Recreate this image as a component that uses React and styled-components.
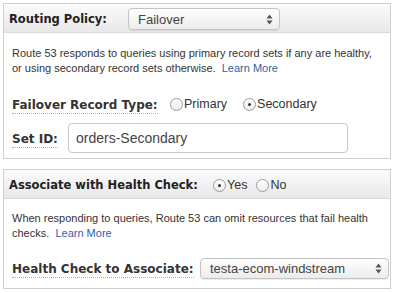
import React from "react";
import styled, { createGlobalStyle } from "styled-components";

const GlobalStyle = createGlobalStyle`
  html, body { margin: 0; padding: 0; background: #fff; }
  body { font-family: "Liberation Sans", Arial, sans-serif; color: #333; }
`;

const Page = styled.div`
  width: 397px;
  height: 293px;
  padding: 3px 6px 0 3px;
  box-sizing: border-box;
  display: flex;
  flex-direction: column;
  gap: 10px;
`;

const Panel = styled.section`
  border: 1px solid #cfcfcf;
  background: #fff;
  display: flex;
  flex-direction: column;
  box-sizing: border-box;
  height: ${(p) => p.$h}px;
`;

const Header = styled.div`
  height: 29px;
  box-sizing: border-box;
  display: flex;
  align-items: center;
  padding: 2px 0 0 5px;
  background: linear-gradient(#fbfbfb, #e8e8e8);
  border-bottom: 1px solid #dadada;
`;

const HeaderLabel = styled.span`
  font-family: "DejaVu Sans", Verdana, sans-serif;
  font-weight: bold;
  font-size: 11.5px;
  color: #222;
  width: ${(p) => p.$width}px;
  flex-shrink: 0;
`;

const Body = styled.div`
  padding: ${(p) => p.$pad};
  display: flex;
  flex-direction: column;
`;

const Desc = styled.p`
  margin: 0;
  font-size: 11px;
  line-height: 15px;
  color: #333;
`;

const Link = styled.a`
  color: #2f5fa8;
  text-decoration: none;
`;

const Row = styled.div`
  display: flex;
  align-items: center;
  margin-top: ${(p) => p.$top}px;
  height: ${(p) => p.$h}px;
`;

const LabelCell = styled.div`
  width: ${(p) => p.$width}px;
  flex-shrink: 0;
  display: flex;
  padding-top: 3px;
`;

const FieldLabel = styled.span`
  font-family: "DejaVu Sans", Verdana, sans-serif;
  font-weight: bold;
  font-size: 12px;
  line-height: 14px;
  color: #333;
  padding-bottom: 1px;
  border-bottom: 1px dotted #b0b0b0;
  white-space: nowrap;
`;

const Select = styled.div`
  width: ${(p) => p.$width}px;
  height: ${(p) => p.$h}px;
  box-sizing: border-box;
  border: 1px solid #c4c4c4;
  border-radius: 4px;
  background: linear-gradient(#fefefe, #ececec);
  box-shadow: 0 1px 1px rgba(0, 0, 0, 0.08);
  display: flex;
  align-items: center;
  justify-content: space-between;
  padding: 0 6px 0 9px;
  font-size: 13px;
  color: #444;
`;

const Input = styled.div`
  width: 280px;
  height: 30px;
  box-sizing: border-box;
  border: 1px solid #c8c8c8;
  border-radius: 4px;
  display: flex;
  align-items: center;
  padding-left: 7px;
  font-size: 14px;
  color: #444;
`;

const Radios = styled.div`
  display: flex;
  align-items: center;
  gap: ${(p) => p.$gap}px;
`;

const RadioItem = styled.label`
  display: flex;
  align-items: center;
  gap: 1px;
  font-size: 12.5px;
  color: #333;
`;

const Circle = styled.span`
  width: 13px;
  height: 13px;
  box-sizing: border-box;
  border-radius: 50%;
  border: 1px solid #9a9a9a;
  background: linear-gradient(#fff, #ececec);
  display: flex;
  align-items: center;
  justify-content: center;
  &::after {
    content: "";
    width: 3px;
    height: 3px;
    border-radius: 50%;
    background: ${(p) => (p.$on ? "#333" : "transparent")};
  }
`;

const Arrows = () => (
  <svg width="7" height="11" viewBox="0 0 7 11">
    <path d="M3.5 0.5 L6.5 4.5 L0.5 4.5 Z" fill="#555" />
    <path d="M3.5 10.5 L6.5 6.5 L0.5 6.5 Z" fill="#555" />
  </svg>
);

const Radio = ({ on, children }) => (
  <RadioItem>
    <Circle $on={on} />
    {children}
  </RadioItem>
);

export default function App() {
  return (
    <>
      <GlobalStyle />
      <Page>
        <Panel $h={156}>
          <Header>
            <HeaderLabel $width={119}>Routing Policy:</HeaderLabel>
            <Select $width={152} $h={22}>
              Failover
              <Arrows />
            </Select>
          </Header>
          <Body $pad="13px 8px 0 8px">
            <Desc>
              Route 53 responds to queries using primary record sets if any are healthy,
              or using secondary record sets otherwise.{"\u00a0 "}
              <Link href="#">Learn More</Link>
            </Desc>
            <Row $top={17} $h={22}>
              <LabelCell $width={158}>
                <FieldLabel>Failover Record Type:</FieldLabel>
              </LabelCell>
              <Radios $gap={16}>
                <Radio>Primary</Radio>
                <Radio on>Secondary</Radio>
              </Radios>
            </Row>
            <Row $top={8} $h={30}>
              <LabelCell $width={56}>
                <FieldLabel>Set ID:</FieldLabel>
              </LabelCell>
              <Input>orders-Secondary</Input>
            </Row>
          </Body>
        </Panel>
        <Panel $h={120}>
          <Header>
            <HeaderLabel $width={204}>Associate with Health Check:</HeaderLabel>
            <Radios $gap={9}>
              <Radio on>Yes</Radio>
              <Radio>No</Radio>
            </Radios>
          </Header>
          <Body $pad="12px 0 0 8px">
            <Desc>
              When responding to queries, Route 53 can omit resources that fail health
              checks.{"\u00a0 "}
              <Link href="#">Learn More</Link>
            </Desc>
            <Row $top={17} $h={21}>
              <LabelCell $width={188}>
                <FieldLabel>Health Check to Associate:</FieldLabel>
              </LabelCell>
              <Select $width={189} $h={21}>
                testa-ecom-windstream
                <Arrows />
              </Select>
            </Row>
          </Body>
        </Panel>
      </Page>
    </>
  );
}
